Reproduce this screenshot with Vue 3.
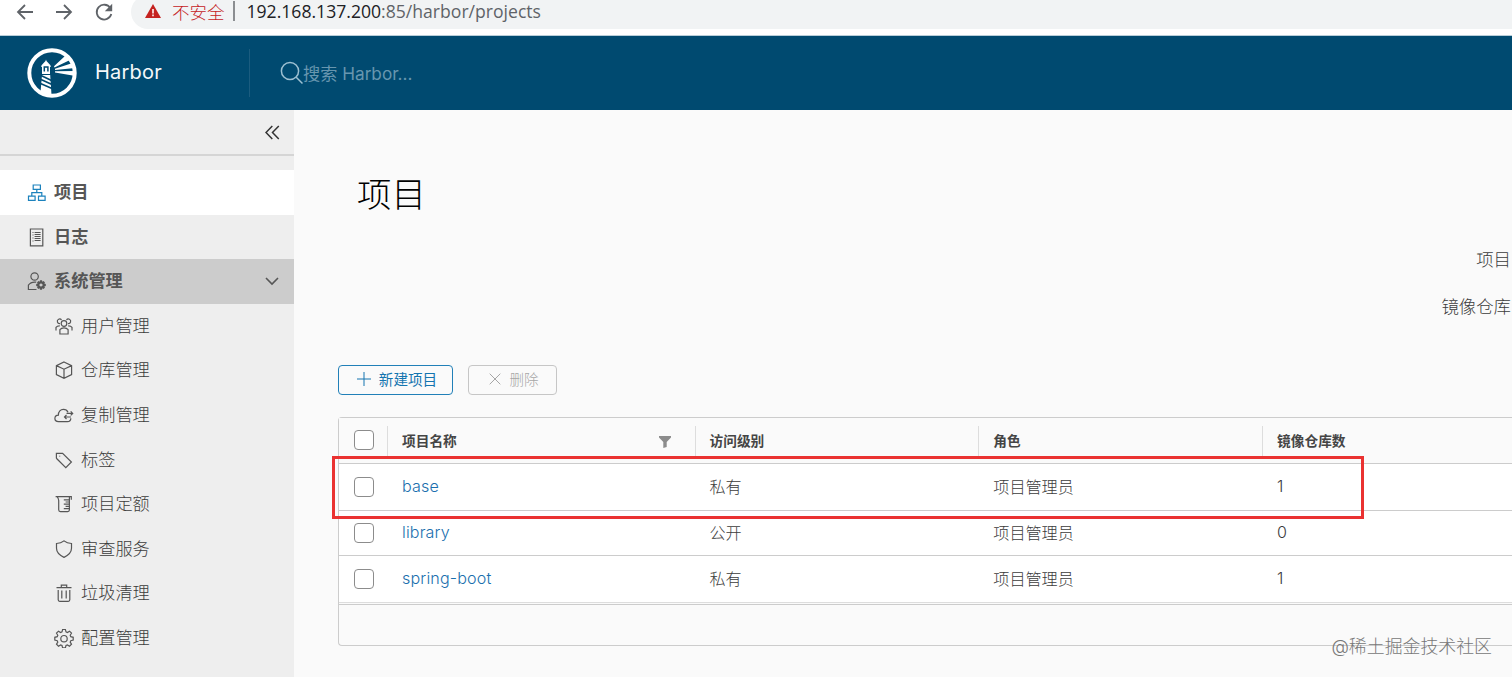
<template>
  <div class="page">
    <!-- Browser toolbar -->
    <div class="browser-bar">
      <div class="nav-icons">
        <svg width="18" height="20" viewBox="0 0 18 20"><path d="M17 10H2M9 3L2 10l7 7" /></svg>
        <svg width="18" height="20" viewBox="0 0 18 20"><path d="M1 10h15M9 3l7 7-7 7" /></svg>
        <svg width="20" height="20" viewBox="0 0 20 20">
          <path d="M16.3 6A7.4 7.4 0 1 0 17.3 12" />
          <path class="solid" d="M18.2 1.8v7.4h-7.4z" />
        </svg>
      </div>
      <div class="omnibox">
        <svg class="warning" width="16" height="14" viewBox="0 0 16 14">
          <path d="M8 0l8 14H0z" fill="#c5221f" />
          <path d="M8 5v4.4M8 10.6v1.6" stroke="#fff" stroke-width="1.5" />
        </svg>
        <span class="unsafe">不安全</span>
        <span class="bar"></span>
        <span class="url"><b>192.168.137.200</b>:85/harbor/projects</span>
      </div>
    </div>

    <!-- Harbor header -->
    <header class="header">
      <svg class="logo" width="50" height="50" viewBox="0 0 50 50">
        <circle cx="25" cy="25" r="22.7" fill="none" stroke="#fff" stroke-width="4" />
        <path d="M38 8L27 18.2l.5 1.3L43 12zM44 15.500L28 20.800v1.200L48 20zM48 23L28 23.300v1.200L48.500 28z" fill="#fff" />
        <path d="M14 18.500l.8-1.500L18.500 13l.5-1.500.5 1.500 3.700 4 .8 1.500-1 .5v7H15v-7z" fill="#fff" />
        <path d="M17.300 23.500V19h3.600v4.500" fill="none" stroke="#004a70" stroke-width="1.5" />
        <path d="M15 27h8.200l1.300 20-11-2.500z" fill="#fff" />
        <path d="M14 27.500l10.500 5M14 31.500l11 5M13.500 35.500l11.500 5" stroke="#004a70" stroke-width="1.6" />
      </svg>
      <span class="brand">Harbor</span>
      <div class="search">
        <svg width="24" height="24" viewBox="0 0 24 24">
          <circle cx="10" cy="10" r="8.6" /><path d="M16.2 16.2l6.3 6.3" />
        </svg>
        <span>搜索 Harbor...</span>
      </div>
    </header>

    <div class="body">
      <nav class="sidebar">
        <div class="collapse">
          <svg width="15" height="15" viewBox="0 0 15 15"><path d="M7.3 1L1 7.5 7.3 14M13.8 1L7.5 7.5l6.3 6.5" /></svg>
        </div>
        <div
          v-for="item in menu"
          :key="item.label"
          class="item"
          :class="{ active: item.active, group: item.group, sub: item.sub }"
        >
          <svg class="icon" width="20" height="20" viewBox="0 0 20 20">
            <path :d="item.icon" />
            <path v-if="item.solid" class="solid" :d="item.solid" fill-rule="evenodd" />
          </svg>
          <span>{{ item.label }}</span>
          <svg v-if="item.group" class="chevron" width="14" height="9" viewBox="0 0 14 9"><path d="M1 1l6 6 6-6" /></svg>
        </div>
      </nav>

      <main class="content">
        <h1>项目</h1>
        <div class="stats">
          <div class="stat">项目</div>
          <div class="stat">镜像仓库</div>
        </div>
        <div class="actions">
          <button class="btn primary">
            <svg width="14" height="14" viewBox="0 0 14 14"><path d="M7 0v14M0 7h14" /></svg>新建项目
          </button>
          <button class="btn disabled" disabled>
            <svg width="12" height="12" viewBox="0 0 12 12"><path d="M.7.7l10.6 10.6M11.3.7L.7 11.3" /></svg>删除
          </button>
        </div>

        <div class="grid">
          <div class="row head">
            <div class="cell check"><i></i></div>
            <div class="cell name">
              项目名称
              <svg width="12" height="12" viewBox="0 0 12 12"><path d="M0 0h12v1.6L7.7 6v5L4.3 12V6L0 1.6z" fill="#8c8c8c" /></svg>
            </div>
            <div class="cell access">访问级别</div>
            <div class="cell role">角色</div>
            <div class="cell count">镜像仓库数</div>
          </div>
          <div v-for="p in projects" :key="p.name" class="row" :class="p.name">
            <div class="cell check"><i></i></div>
            <div class="cell name"><a>{{ p.name }}</a></div>
            <div class="cell access">{{ p.access }}</div>
            <div class="cell role">项目管理员</div>
            <div class="cell count">{{ p.count }}</div>
          </div>
          <div class="foot"></div>
        </div>
      </main>
    </div>

    <div class="highlight"></div>
    <div class="watermark">@稀土掘金技术社区</div>
  </div>
</template>

<script setup>
import { ref } from 'vue'

// sidebar entries, icons are drawn on a 20x20 box
const menu = ref([
  {
    label: '项目',
    active: true,
    icon: 'M6.2 3h7.2v4.4H6.2zM1.5 14.2h6.6v4.2H1.5zM11.5 14.2h6.6v4.2h-6.6zM9.8 7.4v3.2M4.8 14.2v-3.6h10v3.6',
  },
  {
    label: '日志',
    icon: 'M3.4 2h12.4v16.8H3.4zM5.5 5.500h1M5.5 8h1M5.5 11h1M5.5 14h1M7.6 5.500h6M7.6 7.500h6M7.6 9.500h6M7.6 11.500h6M7.6 13.500h6',
  },
  {
    label: '系统管理',
    group: true,
    icon: 'M11.3 5.5a3.7 3.7 0 1 1-7.4 0a3.7 3.7 0 1 1 7.4 0M9.5 18.500H1.4v-4.300c1.6-2.3 4.4-3.4 7.8-3',
    solid: 'M13 9.2h2l.4 1.5 1.2-.7 1.4 1.4-.7 1.2 1.5.4v2l-1.5.4.7 1.2-1.4 1.4-1.2-.7-.4 1.5h-2l-.4-1.5-1.2.7-1.4-1.4.7-1.2-1.5-.4v-2l1.5-.4-.7-1.2 1.4-1.4 1.2.7zM14 12.400a1.600 1.600 0 1 0 .01 0z',
  },
  {
    label: '用户管理',
    sub: true,
    icon: 'M12.8 7.500a2.8 2.8 0 1 1-5.6 0a2.8 2.8 0 1 1 5.6 0M5.9 18v-4.4c1.8-2.4 6.4-2.4 8.2 0v4.4zM6 7.500a2.3 2.3 0 1 1 1.5-3.600M14 7.500a2.3 2.3 0 1 0-1.5-3.600M2 14.500v-3.2c.8-1 2-1.5 3.8-1.4M18 14.500v-3.2c-.8-1-2-1.5-3.8-1.4',
  },
  {
    label: '仓库管理',
    sub: true,
    icon: 'M10 2l7.6 3.6v9L10 18.4l-7.6-3.8v-9zM2.4 5.6L10 9.2l7.6-3.6M10 9.2v9.2',
  },
  {
    label: '复制管理',
    sub: true,
    icon: 'M16.8 13.200c0 2-1.3 3.4-3.4 3.4H4.5C2.4 16.6.9 15.3.9 13.4s1.5-3.2 3.5-3.3C4.3 6.5 6.6 4.4 9.4 4.4c2.2 0 3.800 1.100 4.600 2.800M10.500 12h6.500M12.500 10l-2 2 2 2M12.500 8.400h6M16.700 6.400l2 2-2 2',
  },
  {
    label: '标签',
    sub: true,
    icon: 'M2.4 3.4h6.2l8.8 8.6-5.6 5.6-8.700-8.600-.7-1zM5.700 5.700v.9',
  },
  {
    label: '项目定额',
    sub: true,
    icon: 'M1.6 2.6h15.700v3.200M3 2.600c1.500 1.500 1.700 2.400 1.700 4v9.200c0 1.200.7 1.800 1.700 1.800h7.300c1.100 0 1.700-.6 1.700-1.800V2.600M9.800 5.800h5.600M11.600 8h3.800M9.800 10.200h5.600M11.600 12.400h3.800M9.800 14.600h5.600',
  },
  {
    label: '审查服务',
    sub: true,
    icon: 'M10 1.9c2.200 1.800 4.500 2.500 7.500 2.600v4.800c0 4.300-3.200 7-7.500 9.100-4.300-2.100-7.500-4.800-7.500-9.100V4.500c3-.1 5.300-.8 7.500-2.600z',
  },
  {
    label: '垃圾清理',
    sub: true,
    icon: 'M2.5 4.6h15M7.300 4.400V2.200h5.400v2.200M4.200 7v9.800c0 .9.600 1.500 1.500 1.500h8.600c.9 0 1.500-.6 1.500-1.500V7M7.800 7.500v8M12.200 7.500v8',
  },
  {
    label: '配置管理',
    sub: true,
    icon: 'M8.6 1.5h2.8l.6 2.4 1.4.6 2.1-1.3 2 2-1.3 2.1.6 1.4 2.4.6v2.8l-2.4.6-.6 1.4 1.3 2.1-2 2-2.1-1.3-1.4.6-.6 2.3H8.6L8 17.5l-1.4-.6-2.1 1.3-2-2 1.3-2.1-.6-1.4-2.4-.6V9.3l2.4-.6.6-1.4-1.3-2.1 2-2 2.1 1.3L8 3.9zM13.2 10.7a3.2 3.2 0 1 1-6.4 0a3.2 3.2 0 1 1 6.4 0',
  },
])

const projects = ref([
  { name: 'base', access: '私有', count: 1 },
  { name: 'library', access: '公开', count: 0 },
  { name: 'spring-boot', access: '私有', count: 1 },
])
</script>

<style>
body {
  margin: 0;
  overflow: hidden;
}
</style>

<style scoped>
.page {
  position: relative;
  width: 1512px;
  height: 677px;
  overflow: hidden;
  background: #fafafa;
  color: #565656;
  font-family: Inter, "Noto Sans CJK SC", sans-serif;
}

svg {
  flex: none;
  fill: none;
  stroke: currentColor;
}

/* browser toolbar */
.browser-bar {
  display: flex;
  height: 35px;
  background: #fff;
  border-bottom: 1px solid #b9ced9;
}

.nav-icons {
  display: flex;
  gap: 21px;
  width: 115px;
  padding: 2px 0 0 16px;
  color: #5f6368;
}

.nav-icons svg {
  stroke-width: 1.8;
}

.nav-icons .solid {
  fill: #5f6368;
  stroke: none;
}

.omnibox {
  display: flex;
  align-items: center;
  flex: 1;
  box-sizing: border-box;
  height: 34px;
  margin-top: -5px;
  padding: 0 0 2px 14px;
  border-radius: 17px 0 0 17px;
  background: #f1f3f4;
  font-family: "Open Sans", "Noto Sans CJK SC", sans-serif;
}

.warning {
  stroke: none;
}

.unsafe {
  margin-left: 11px;
  font-family: "Noto Sans CJK SC", sans-serif;
  font-size: 17.5px;
  font-weight: 300;
  color: #c5221f;
}

.bar {
  width: 2px;
  height: 20px;
  margin: 0 12px 0 8px;
  background: #8b8e91;
}

.url {
  font-size: 17.6px;
  color: #5f6368;
}

.url b {
  font-weight: 400;
  color: #202124;
}

/* header */
.header {
  display: flex;
  align-items: center;
  height: 74px;
  background: #004a70;
}

.logo {
  margin-left: 26.5px;
  stroke: none;
}

.brand {
  width: 154px;
  margin: -2px 0 0 18.5px;
  font-size: 20px;
  letter-spacing: 0.2px;
  color: #f4f8fa;
}

.search {
  display: flex;
  align-items: center;
  height: 48px;
  padding-left: 30px;
  border-left: 1px solid #1b5c7f;
  color: #6796af;
  font-size: 17.2px;
}

.search span {
  margin: -2px 0 0 -1px;
}

.search svg {
  color: #9dc0d2;
  stroke-width: 1.5;
}

/* sidebar */
.body {
  display: flex;
}

.sidebar {
  width: 294px;
  height: 567px;
  background: #eee;
}

.collapse {
  display: flex;
  align-items: center;
  justify-content: flex-end;
  box-sizing: border-box;
  height: 46px;
  margin-bottom: 14px;
  padding-right: 14px;
  border-bottom: 2px solid #d5d5d5;
  color: #333;
}

.collapse svg {
  stroke-width: 1.5;
}

.item {
  display: flex;
  align-items: center;
  height: 44.55px;
  padding-left: 27px;
  font-size: 17.2px;
  font-weight: 700;
}

.item span {
  margin: -3px 0 0 7px;
}

.item.active {
  background: #fff;
}

.item.active .icon {
  color: #1c82bd;
}

.item.group {
  background: #ccc;
}

.item.sub {
  padding-left: 54px;
  font-weight: 300;
  color: #3c3c3c;
}

.icon {
  color: #565656;
  stroke-width: 1.2;
}

.icon .solid {
  fill: currentColor;
  stroke: none;
}

.chevron {
  margin: 0 15px 0 auto;
  stroke-width: 1.6;
}

/* content */
.content {
  flex: 1;
  min-width: 0;
  padding-left: 44px;
}

h1 {
  height: 50px;
  margin: 60px 0 0 19px;
  font-size: 34.4px;
  line-height: 50px;
  font-weight: 300;
  color: #000;
}

.stats {
  display: flex;
  flex-direction: column;
  align-items: flex-end;
  margin-top: 17px;
  padding-right: 1px;
  font-size: 17.4px;
  font-weight: 300;
  color: #3c3c3c;
}

.stat {
  height: 46.5px;
  line-height: 46.5px;
}

.actions {
  display: flex;
  gap: 15px;
  margin-top: 35px;
}

.btn {
  display: flex;
  align-items: center;
  justify-content: center;
  box-sizing: border-box;
  height: 30px;
  padding: 0 0 3px 3px;
  border: 1px solid #2180b8;
  border-radius: 4px;
  background: transparent;
  font-family: inherit;
  font-size: 14.6px;
  color: #1475b0;
}

.primary {
  width: 115px;
}

.primary svg,
.disabled svg {
  margin-right: 8px;
}

.disabled {
  width: 89px;
  border-color: #c6c6c6;
  color: #a6a6a6;
  font-weight: 300;
}

/* datagrid */
.grid {
  margin-top: 22px;
  border: 1px solid #ccc;
  border-right: 0;
  border-radius: 4px 0 0 4px;
}

.row {
  display: flex;
  align-items: center;
  box-sizing: border-box;
  height: 46px;
  border-bottom: 1px solid #ccc;
  background: #fff;
  font-size: 16.1px;
  font-weight: 300;
  color: #3c3c3c;
}

.row.base {
  height: 47px;
}

.row.library {
  height: 45px;
}

.row.spring-boot {
  height: 47px;
  border-color: #ddd;
}

.head {
  background: #fafafa;
  font-size: 13.7px;
  font-weight: 700;
  color: #454545;
}

.cell {
  display: flex;
  align-items: center;
  box-sizing: border-box;
  height: 30px;
  padding: 0 0 2px 15px;
}

.head .cell + .cell {
  padding-left: 14px;
  border-left: 1px solid #ddd;
}

.cell.check {
  width: 48px;
  padding-bottom: 0;
}

.head .check {
  padding-bottom: 1px;
}

.check i {
  box-sizing: border-box;
  width: 20px;
  height: 20px;
  border: 1px solid #8c8c8c;
  border-radius: 4px;
  background: #fff;
}

.name {
  width: 307.5px;
  justify-content: space-between;
}

.name svg {
  margin: 4px 24px 0 0;
  stroke: none;
}

.name a {
  color: #1a6fae;
  letter-spacing: 0.15px;
}

.access,
.role {
  width: 283.8px;
}

.count {
  flex: 1;
}

.foot {
  height: 40px;
  margin-top: 1px;
  border-top: 1px solid #ccc;
}

/* red marker drawn over the first project */
.highlight {
  position: absolute;
  left: 332px;
  top: 456px;
  box-sizing: border-box;
  width: 1032px;
  height: 63px;
  border: 3px solid #ea3231;
}

.watermark {
  position: absolute;
  right: 20px;
  top: 634px;
  font-size: 17.9px;
  line-height: 26px;
  font-weight: 300;
  color: #777;
}
</style>
